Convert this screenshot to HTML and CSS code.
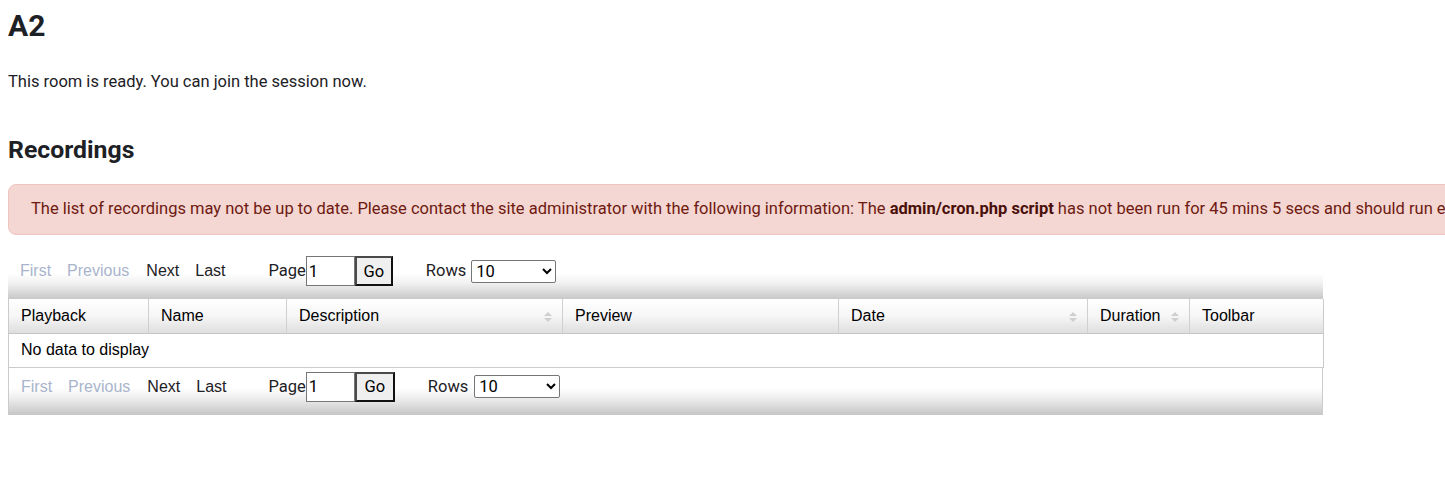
FILE: index.html
```html
<!DOCTYPE html>
<html lang="en">
<head>
<meta charset="utf-8">
<title>A2</title>
<link rel="stylesheet" href="styles.css">
</head>
<body>
<div class="page">
  <h2 class="room-title">A2</h2>
  <p class="status">This room is ready. You can join the session now.</p>
  <h3 class="section-title">Recordings</h3>
  <div class="alert">The list of recordings may not be up to date. Please contact the site administrator with the following information: The <strong>admin/cron.php script</strong> has not been run for 45 mins 5 secs and should run every 1 min.</div>

  <div class="datatable">
    <div class="pager pager-top">
      <span class="pg-link disabled">First</span>
      <span class="pg-link disabled">Previous</span>
      <span class="pg-link">Next</span>
      <span class="pg-link">Last</span>
      <label class="pg-label page-label">Page</label><input class="pg-input" type="text" value="1"><button class="pg-go">Go</button>
      <label class="pg-label rows-label">Rows</label>
      <select class="pg-select"><option>10</option></select>
    </div>
    <table class="grid">
      <colgroup>
        <col style="width:140px"><col style="width:138px"><col style="width:276px"><col style="width:276px"><col style="width:249px"><col style="width:102px"><col style="width:134px">
      </colgroup>
      <thead>
        <tr>
          <th>Playback</th>
          <th>Name</th>
          <th class="sortable">Description<span class="sort"></span></th>
          <th>Preview</th>
          <th class="sortable">Date<span class="sort"></span></th>
          <th class="sortable">Duration<span class="sort"></span></th>
          <th>Toolbar</th>
        </tr>
      </thead>
      <tbody>
        <tr><td colspan="7">No data to display</td></tr>
      </tbody>
    </table>
    <div class="pager pager-bottom">
      <span class="pg-link disabled">First</span>
      <span class="pg-link disabled">Previous</span>
      <span class="pg-link">Next</span>
      <span class="pg-link">Last</span>
      <label class="pg-label page-label">Page</label><input class="pg-input" type="text" value="1"><button class="pg-go">Go</button>
      <label class="pg-label rows-label">Rows</label>
      <select class="pg-select"><option>10</option></select>
    </div>
  </div>
</div>
</body>
</html>
```

FILE: styles.css
```css
html, body {
  margin: 0;
  padding: 0;
  background: #fff;
}
body {
  font-family: Roboto, "Liberation Sans", Arial, sans-serif;
  font-size: 16.5px;
  line-height: 1.5;
  color: #1d2125;
  overflow: hidden;
}
.page {
  padding: 8px;
  overflow: hidden;
}
.room-title {
  font-size: 30px;
  font-weight: 700;
  line-height: 1.2;
  margin: 0;
}
.status {
  margin: 26px 0 0;
  font-size: 16.5px;
  line-height: 24.75px;
}
.section-title {
  font-size: 24.8px;
  font-weight: 700;
  line-height: 1.2;
  margin: 40px 0 0;
}
.alert {
  margin-top: 19px;
  width: max-content;
  white-space: nowrap;
  background: #f4d6d2;
  color: #6e1a11;
  border: 1px solid #efc5c0;
  border-radius: 8px;
  padding: 12.5px 22px;
  line-height: 24.75px;
  font-size: 16.5px;
}
.alert strong {
  color: #4a0f09;
  font-weight: 700;
}
.datatable {
  margin-top: 20px;
  width: 1315px;
  font-family: "Liberation Sans", Arial, sans-serif;
  font-size: 16px;
  color: #000;
}
.pager {
  display: flex;
  align-items: center;
  height: 30px;
  padding: 1px 12px 13px;
  background: linear-gradient(#fff 0%, #fff 42%, #f0f0f0 65%, #c8c8c8 100%);
}
.pager-bottom {
  padding: 4px 12px 13px;
  border-left: 1px solid #cbcbcb;
  border-right: 1px solid #cbcbcb;
  background: linear-gradient(#fff 0%, #fff 42%, #f0f0f0 62%, #c6c6c6 100%);
}
.pg-link {
  color: #1d2125;
  margin-right: 16px;
}
.pg-link:nth-child(2) {
  margin-right: 17px;
}
.pg-link.disabled {
  color: #a9b4cc;
}
.pg-label {
  font-family: Roboto, "Liberation Sans", Arial, sans-serif;
  font-size: 16.5px;
  line-height: 30px;
  color: #1d2125;
}
.page-label {
  margin-left: 27px;
}
.rows-label {
  margin-left: 33px;
  margin-right: 5px;
}
.pg-input {
  box-sizing: border-box;
  width: 49px;
  height: 30px;
  margin: 0;
  padding: 1px 2px;
  border: 1px solid #767676;
  font-family: Roboto, "Liberation Sans", Arial, sans-serif;
  font-size: 16.5px;
  color: #000;
  background: #fff;
}
.pg-go {
  box-sizing: border-box;
  width: 38px;
  height: 30px;
  margin: 0;
  padding: 0;
  border: 2px solid;
  border-color: #4a4a4a #111 #111 #4a4a4a;
  background: #efefef;
  font-family: Roboto, "Liberation Sans", Arial, sans-serif;
  font-size: 16.5px;
  color: #000;
}
.pager-bottom .pg-go {
  width: 40px;
}
.pager-bottom .page-label {
  margin-left: 26px;
}
.pager-bottom .rows-label {
  margin-left: 33px;
  margin-right: 6px;
}
.pg-select {
  box-sizing: border-box;
  width: 85px;
  height: 23px;
  margin: 0;
  font-family: Roboto, "Liberation Sans", Arial, sans-serif;
  font-size: 16.5px;
  color: #000;
  background: #fff;
  border: 1px solid #767676;
  border-radius: 2px;
}
.pager-bottom .pg-select {
  width: 86px;
}
.grid {
  width: 1315px;
  border-collapse: collapse;
  table-layout: fixed;
}
.grid th {
  position: relative;
  text-align: left;
  font-weight: 400;
  height: 34px;
  box-sizing: border-box;
  padding: 0 12px;
  background: linear-gradient(#fff 0%, #f6f6f6 50%, #dedede 100%);
  border-left: 1px solid #d0d0d0;
  border-bottom: 1px solid #c6c6c6;
}
.grid th:first-child {
  border-left: 1px solid #cbcbcb;
}
.grid th:last-child {
  border-right: 1px solid #cbcbcb;
}
.sort {
  position: absolute;
  right: 14px;
  top: 13px;
  width: 0;
  height: 11px;
}
.sort::before,
.sort::after {
  content: "";
  position: absolute;
  left: -4px;
  border-left: 4px solid transparent;
  border-right: 4px solid transparent;
}
.sort::before {
  top: 0;
  border-bottom: 4px solid #cfcfcf;
}
.sort::after {
  top: 6px;
  border-top: 4px solid #cfcfcf;
}
.grid td {
  height: 34px;
  box-sizing: border-box;
  padding: 0 12px;
  border-left: 1px solid #cbcbcb;
  border-right: 1px solid #cbcbcb;
  border-bottom: 1px solid #cbcbcb;
}
```
